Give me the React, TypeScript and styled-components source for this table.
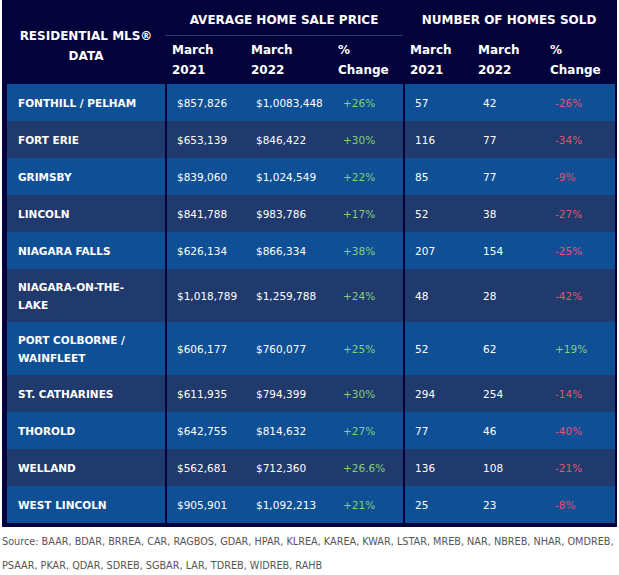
import styled, { createGlobalStyle } from 'styled-components';

const GlobalStyle = createGlobalStyle`
  body {
    margin: 0;
    background: #ffffff;
    font-family: 'DejaVu Sans', sans-serif;
  }
`;

const DARK = '#03023a';

const Page = styled.div`
  width: 619px;
  padding-left: 2px;
  box-sizing: border-box;
`;

const Frame = styled.div`
  width: 615px;
  background: ${DARK};
  padding: 0 2px 4px 5px;
  box-sizing: border-box;
`;

const Table = styled.table`
  width: 608px;
  table-layout: fixed;
  border-collapse: separate;
  border-spacing: 0;
`;

const GroupTitle = styled.th<{ $underline?: boolean }>`
  height: 36px;
  padding: 5px 0 0;
  color: #ffffff;
  font-weight: 700;
  font-size: 12px;
  text-align: center;
  vertical-align: middle;
  box-sizing: border-box;
  border-bottom: 1px solid ${p => (p.$underline ? '#2c3b70' : 'transparent')};
`;

const CornerTitle = styled.th`
  padding: 8px 0 0;
  color: #ffffff;
  font-weight: 700;
  font-size: 12px;
  line-height: 20px;
  text-align: center;
  vertical-align: middle;
`;

const SubTitle = styled.th<{ $divider?: boolean }>`
  height: 48px;
  padding: 0 0 0 5px;
  color: #ffffff;
  font-weight: 700;
  font-size: 12px;
  line-height: 20px;
  text-align: left;
  vertical-align: middle;
  box-sizing: border-box;
  border-left: ${p => (p.$divider ? `2px solid ${DARK}` : 'none')};
`;

const Row = styled.tr<{ $alt: boolean }>`
  height: 37px;
  background: ${p => (p.$alt ? '#213a6d' : '#0e4f95')};
`;

const NameCell = styled.td`
  padding: 8.5px 17px 8.5px 11px;
  color: #ffffff;
  font-weight: 700;
  font-size: 10.5px;
  line-height: 18px;
  vertical-align: middle;
`;

const ValueCell = styled.td<{ $divider?: boolean; $tone?: 'up' | 'down' }>`
  padding: 0 0 0 10px;
  color: ${p => (p.$tone === 'up' ? '#82cf7c' : p.$tone === 'down' ? '#e2536c' : '#ffffff')};
  font-size: 10.5px;
  line-height: 18px;
  vertical-align: middle;
  white-space: nowrap;
  border-left: ${p => (p.$divider ? `2px solid ${DARK}` : 'none')};
`;

const Source = styled.p`
  margin: 0;
  padding: 3px 0 0 0;
  color: #555555;
  font-size: 9.7px;
  line-height: 24px;
  white-space: nowrap;
`;

type Region = {
  name: string;
  price21: string;
  price22: string;
  priceChange: string;
  sold21: string;
  sold22: string;
  soldChange: string;
};

const regions: Region[] = [
  { name: 'FONTHILL / PELHAM', price21: '$857,826', price22: '$1,0083,448', priceChange: '+26%', sold21: '57', sold22: '42', soldChange: '-26%' },
  { name: 'FORT ERIE', price21: '$653,139', price22: '$846,422', priceChange: '+30%', sold21: '116', sold22: '77', soldChange: '-34%' },
  { name: 'GRIMSBY', price21: '$839,060', price22: '$1,024,549', priceChange: '+22%', sold21: '85', sold22: '77', soldChange: '-9%' },
  { name: 'LINCOLN', price21: '$841,788', price22: '$983,786', priceChange: '+17%', sold21: '52', sold22: '38', soldChange: '-27%' },
  { name: 'NIAGARA FALLS', price21: '$626,134', price22: '$866,334', priceChange: '+38%', sold21: '207', sold22: '154', soldChange: '-25%' },
  { name: 'NIAGARA-ON-THE-LAKE', price21: '$1,018,789', price22: '$1,259,788', priceChange: '+24%', sold21: '48', sold22: '28', soldChange: '-42%' },
  { name: 'PORT COLBORNE / WAINFLEET', price21: '$606,177', price22: '$760,077', priceChange: '+25%', sold21: '52', sold22: '62', soldChange: '+19%' },
  { name: 'ST. CATHARINES', price21: '$611,935', price22: '$794,399', priceChange: '+30%', sold21: '294', sold22: '254', soldChange: '-14%' },
  { name: 'THOROLD', price21: '$642,755', price22: '$814,632', priceChange: '+27%', sold21: '77', sold22: '46', soldChange: '-40%' },
  { name: 'WELLAND', price21: '$562,681', price22: '$712,360', priceChange: '+26.6%', sold21: '136', sold22: '108', soldChange: '-21%' },
  { name: 'WEST LINCOLN', price21: '$905,901', price22: '$1,092,213', priceChange: '+21%', sold21: '25', sold22: '23', soldChange: '-8%' },
];

const tone = (v: string) => (v.startsWith('+') ? 'up' : 'down');

const App: React.FC = () => (
  <Page>
    <GlobalStyle />
    <Frame>
      <Table>
        <colgroup>
          <col style={{ width: 158 }} />
          <col style={{ width: 81 }} />
          <col style={{ width: 87 }} />
          <col style={{ width: 70 }} />
          <col style={{ width: 70 }} />
          <col style={{ width: 72 }} />
          <col style={{ width: 70 }} />
        </colgroup>
        <thead>
          <tr>
            <CornerTitle rowSpan={2}>
              RESIDENTIAL MLS®
              <br />
              DATA
            </CornerTitle>
            <GroupTitle colSpan={3} $underline>
              AVERAGE HOME SALE PRICE
            </GroupTitle>
            <GroupTitle colSpan={3}>NUMBER OF HOMES SOLD</GroupTitle>
          </tr>
          <tr>
            <SubTitle $divider>March<br />2021</SubTitle>
            <SubTitle>March<br />2022</SubTitle>
            <SubTitle>%<br />Change</SubTitle>
            <SubTitle $divider>March<br />2021</SubTitle>
            <SubTitle>March<br />2022</SubTitle>
            <SubTitle>%<br />Change</SubTitle>
          </tr>
        </thead>
        <tbody>
          {regions.map((r, i) => (
            <Row key={r.name} $alt={i % 2 === 1}>
              <NameCell>{r.name}</NameCell>
              <ValueCell $divider>{r.price21}</ValueCell>
              <ValueCell>{r.price22}</ValueCell>
              <ValueCell $tone={tone(r.priceChange)}>{r.priceChange}</ValueCell>
              <ValueCell $divider>{r.sold21}</ValueCell>
              <ValueCell>{r.sold22}</ValueCell>
              <ValueCell $tone={tone(r.soldChange)}>{r.soldChange}</ValueCell>
            </Row>
          ))}
        </tbody>
      </Table>
    </Frame>
    <Source>
      Source: BAAR, BDAR, BRREA, CAR, RAGBOS, GDAR, HPAR, KLREA, KAREA, KWAR, LSTAR, MREB, NAR, NBREB, NHAR, OMDREB,
      <br />
      PSAAR, PKAR, QDAR, SDREB, SGBAR, LAR, TDREB, WIDREB, RAHB
    </Source>
  </Page>
);

export default App;
